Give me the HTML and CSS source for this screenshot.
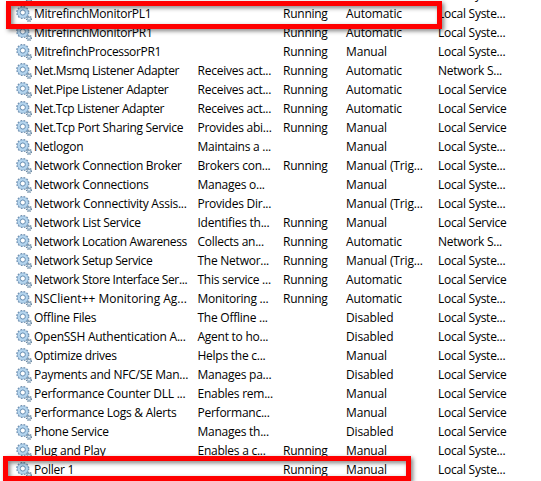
FILE: index.html
```html
<!DOCTYPE html>
<html lang="en">
<head>
<meta charset="utf-8">
<title>Services</title>
<link rel="stylesheet" href="styles.css">
</head>
<body>
<svg class="defs" width="0" height="0" aria-hidden="true">
  <symbol id="gear" viewBox="0 0 16 16">
    <circle cx="6.8" cy="6.5" r="5.7" fill="none" stroke="#6f8fae" stroke-width="1.8" stroke-dasharray="1.7 1.284"/>
    <circle cx="6.8" cy="6.5" r="4.1" fill="none" stroke="#7fa5c8" stroke-width="3.2"/>
    <circle cx="6.8" cy="6.5" r="4" fill="none" stroke="#b5d5ee" stroke-width="2.3"/>
    <circle cx="6.8" cy="6.5" r="2.5" fill="#fff" stroke="#5f88ae" stroke-width=".9"/>
    <circle cx="13" cy="12.8" r="2.4" fill="none" stroke="#68869f" stroke-width="1.5" stroke-dasharray="1.1 .785"/>
    <circle cx="13" cy="12.8" r="1.5" fill="#e4f0f9" stroke="#86a5c0" stroke-width="1"/>
  </symbol>
</svg>
<main class="services">
  <div class="row"><svg class="icon"><use href="#gear"/></svg><span></span><span></span><span></span><span></span><span>Local Syste...</span></div>
  <div class="row"><svg class="icon"><use href="#gear"/></svg><span>MitrefinchMonitorPL1</span><span></span><span>Running</span><span class="start">Automatic</span><span>Local Syste...</span></div>
  <div class="row"><svg class="icon"><use href="#gear"/></svg><span>MitrefinchMonitorPR1</span><span></span><span>Running</span><span class="start">Automatic</span><span>Local Syste...</span></div>
  <div class="row"><svg class="icon"><use href="#gear"/></svg><span class="snug">MitrefinchProcessorPR1</span><span></span><span>Running</span><span class="start">Manual</span><span>Local Syste...</span></div>
  <div class="row"><svg class="icon"><use href="#gear"/></svg><span class="tight">Net.Msmq Listener Adapter</span><span>Receives act...</span><span>Running</span><span class="start">Automatic</span><span>Network S...</span></div>
  <div class="row"><svg class="icon"><use href="#gear"/></svg><span class="tight">Net.Pipe Listener Adapter</span><span>Receives act...</span><span>Running</span><span class="start">Automatic</span><span>Local Service</span></div>
  <div class="row"><svg class="icon"><use href="#gear"/></svg><span class="tight">Net.Tcp Listener Adapter</span><span>Receives act...</span><span>Running</span><span class="start">Automatic</span><span>Local Service</span></div>
  <div class="row"><svg class="icon"><use href="#gear"/></svg><span class="snug">Net.Tcp Port Sharing Service</span><span>Provides abi...</span><span>Running</span><span class="start">Manual</span><span>Local Service</span></div>
  <div class="row"><svg class="icon"><use href="#gear"/></svg><span>Netlogon</span><span>Maintains a ...</span><span></span><span class="start">Manual</span><span>Local Syste...</span></div>
  <div class="row"><svg class="icon"><use href="#gear"/></svg><span class="snug">Network Connection Broker</span><span>Brokers con...</span><span>Running</span><span class="start">Manual (Trig...</span><span>Local Syste...</span></div>
  <div class="row"><svg class="icon"><use href="#gear"/></svg><span class="snug">Network Connections</span><span>Manages o...</span><span></span><span class="start">Manual</span><span>Local Syste...</span></div>
  <div class="row"><svg class="icon"><use href="#gear"/></svg><span>Network Connectivity Assis...</span><span>Provides Dir...</span><span></span><span class="start">Manual (Trig...</span><span>Local Syste...</span></div>
  <div class="row"><svg class="icon"><use href="#gear"/></svg><span class="snug">Network List Service</span><span>Identifies th...</span><span>Running</span><span class="start">Manual</span><span>Local Service</span></div>
  <div class="row"><svg class="icon"><use href="#gear"/></svg><span class="tight">Network Location Awareness</span><span>Collects an...</span><span>Running</span><span class="start">Automatic</span><span>Network S...</span></div>
  <div class="row"><svg class="icon"><use href="#gear"/></svg><span class="tight">Network Setup Service</span><span>The Networ...</span><span>Running</span><span class="start">Manual (Trig...</span><span>Local Syste...</span></div>
  <div class="row"><svg class="icon"><use href="#gear"/></svg><span class="tight">Network Store Interface Ser...</span><span>This service ...</span><span>Running</span><span class="start">Automatic</span><span>Local Service</span></div>
  <div class="row"><svg class="icon"><use href="#gear"/></svg><span class="loose">NSClient++ Monitoring Ag...</span><span>Monitoring ...</span><span>Running</span><span class="start">Automatic</span><span>Local Syste...</span></div>
  <div class="row"><svg class="icon"><use href="#gear"/></svg><span>Offline Files</span><span>The Offline ...</span><span></span><span class="start">Disabled</span><span>Local Syste...</span></div>
  <div class="row"><svg class="icon"><use href="#gear"/></svg><span>OpenSSH Authentication A...</span><span>Agent to ho...</span><span></span><span class="start">Disabled</span><span>Local Syste...</span></div>
  <div class="row"><svg class="icon"><use href="#gear"/></svg><span class="snug">Optimize drives</span><span>Helps the c...</span><span></span><span class="start">Manual</span><span>Local Syste...</span></div>
  <div class="row"><svg class="icon"><use href="#gear"/></svg><span>Payments and NFC/SE Man...</span><span>Manages pa...</span><span></span><span class="start">Disabled</span><span>Local Service</span></div>
  <div class="row"><svg class="icon"><use href="#gear"/></svg><span>Performance Counter DLL ...</span><span>Enables rem...</span><span></span><span class="start">Manual</span><span>Local Service</span></div>
  <div class="row"><svg class="icon"><use href="#gear"/></svg><span>Performance Logs &amp; Alerts</span><span>Performanc...</span><span></span><span class="start">Manual</span><span>Local Service</span></div>
  <div class="row"><svg class="icon"><use href="#gear"/></svg><span class="snug">Phone Service</span><span>Manages th...</span><span></span><span class="start">Disabled</span><span>Local Service</span></div>
  <div class="row"><svg class="icon"><use href="#gear"/></svg><span>Plug and Play</span><span>Enables a c...</span><span>Running</span><span class="start">Manual</span><span>Local Syste...</span></div>
  <div class="row"><svg class="icon"><use href="#gear"/></svg><span>Poller 1</span><span></span><span>Running</span><span class="start">Manual</span><span>Local Syste...</span></div>
</main>
<div class="mark mark-monitor"></div>
<div class="mark mark-poller"></div>
</body>
</html>
```
FILE: styles.css
```css
html, body {
  margin: 0;
  height: 481px;
  overflow: hidden;
  background: #fff;
}
body {
  position: relative;
  font-family: "Open Sans", "Noto Sans", sans-serif;
  font-size: 12px;
  letter-spacing: -0.25px;
  color: #000;
}
.defs { position: absolute; }
.services {
  margin-top: -15px;
  padding-left: 16px;
}
.row {
  display: grid;
  grid-template-columns: 18px 163.5px 85.5px 63px 92px 100px;
  height: 19px;
  line-height: 19px;
  white-space: nowrap;
}
.icon {
  width: 16px;
  height: 16px;
  margin-top: 2px;
}
.snug { letter-spacing: -0.32px; }
.tight { letter-spacing: -0.37px; }
.loose { letter-spacing: 0; }
.start { letter-spacing: -0.15px; }
.mark {
  position: absolute;
  box-sizing: border-box;
  border: 5px solid #f00;
  filter: drop-shadow(2px 2px 2px rgba(0, 0, 0, 0.5));
}
.mark-monitor {
  left: 6px;
  top: 1px;
  width: 436px;
  height: 28px;
}
.mark-poller {
  left: 3px;
  top: 456px;
  width: 408px;
  height: 25px;
}
```
